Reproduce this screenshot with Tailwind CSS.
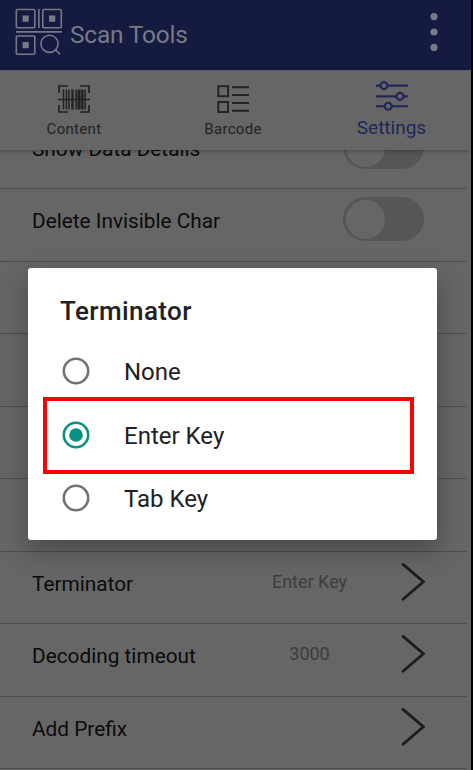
<!DOCTYPE html>
<html lang="en">
<head>
    <meta charset="UTF-8">
    <meta name="viewport" content="width=device-width, initial-scale=1.0">
    <title>Scan Tools - Settings</title>
    <script src="https://cdn.jsdelivr.net/npm/@tailwindcss/browser@4"></script>
</head>
<body class="bg-black font-['Roboto',sans-serif]">
    <div class="relative flex flex-col w-[471px] h-[770px] overflow-hidden bg-[#666666]">

        <!-- App bar -->
        <header class="flex shrink-0 items-start h-[70px] bg-[#151a40] text-[#777985]">
            <svg class="ml-[15px] mt-2 shrink-0" width="48" height="48" viewBox="0 0 48 48" fill="none" stroke="currentColor" stroke-width="1.6">
                <rect x="1.3" y="1.5" width="18.5" height="18.3" rx="1" />
                <rect x="27.8" y="1.5" width="18.5" height="18.3" rx="1" />
                <rect x="1.3" y="28" width="18.5" height="18.3" rx="1" />
                <path d="M23.9 1v19M1 23.9h46" />
                <circle cx="34.5" cy="35.8" r="8.6" />
                <path d="M40.5 41.8l4.6 4.6" />
                <path d="M7.5 7.5h6.3v6.3h-6.3zM34 7.5h6.3v6.3H34zM7.5 34h6.3v6.3h-6.3z" fill="currentColor" stroke="none" />
            </svg>
            <h1 class="ml-[7px] mt-[19px] text-[24.4px] leading-8 tracking-[-0.15px]">Scan Tools</h1>
            <svg class="ml-auto mr-[33px] mt-[12px]" width="8" height="40" viewBox="0 0 8 40" fill="currentColor">
                <circle cx="4" cy="4.6" r="3.6" />
                <circle cx="4" cy="20" r="3.6" />
                <circle cx="4" cy="35.4" r="3.6" />
            </svg>
        </header>

        <!-- Tabs -->
        <nav class="relative z-10 grid grid-cols-[148px_170px_147px] shrink-0 h-20 border-t border-[#5b5e75] bg-[#666666] text-[#222222] shadow-[0_1px_4px_rgba(0,0,0,0.3)]">
            <div class="flex flex-col items-center pt-[13px]">
                <svg width="34" height="30" viewBox="0 0 34 30" fill="none" stroke="currentColor">
                    <path stroke-width="1.7" d="M2 9V2h9M23 2h9v7M32 21v7h-9M11 28H2v-7" />
                    <path stroke-width="1.4" d="M1 15.5h32" />
                    <path stroke-width="1.5" d="M6.5 5.5v20M9.4 5.5v20M12 5.5v20M19 5.5v20M28.2 5.5v20" />
                    <path stroke-width="2.4" d="M15.5 5.5v20M25.4 5.5v20" />
                    <path stroke-width="3.2" d="M22 5.5v20" />
                </svg>
                <span class="mt-[5px] text-[15px] leading-5 tracking-[0.3px]">Content</span>
            </div>
            <div class="flex flex-col items-center pt-[13px]">
                <svg width="34" height="30" viewBox="0 0 34 30" fill="none" stroke="currentColor" stroke-width="1.9">
                    <rect x="2.3" y="2.2" width="9.8" height="10" />
                    <rect x="2.3" y="18" width="9.8" height="10" />
                    <path d="M16 3.2h17M16 11h17M16 19h17M16 26.7h17" />
                </svg>
                <span class="mt-[5px] text-[15px] leading-5 tracking-[0.3px]">Barcode</span>
            </div>
            <div class="flex flex-col items-center pt-[9px] text-[#1f2658]">
                <svg width="34" height="32" viewBox="0 0 34 32" fill="none" stroke="currentColor" stroke-width="2.1">
                    <path d="M1 5.6h4.5M12.5 5.6h20.3M1 16.4h20.3M28.5 16.4h4.3M1 26.2h8.8M16.8 26.2h16" />
                    <circle cx="9" cy="5.6" r="3.5" />
                    <circle cx="25" cy="16.4" r="3.5" />
                    <circle cx="13.2" cy="26.2" r="3.5" />
                </svg>
                <span class="mt-[4px] text-[19px] leading-6">Settings</span>
            </div>
        </nav>

        <!-- Settings list, scrolled so that the first row is partly under the tabs -->
        <main class="-mt-[33px] w-[466px] text-[20.8px] leading-6 text-[#0b0b0b]">
            <div class="flex items-start h-[72.45px] border-b border-[#4b4b4b] pl-8">
                <span class="mt-[20px]">Show Data Details</span>
                <div class="ml-auto mr-[42px] mt-[8px] flex items-center w-[81px] h-11 rounded-full bg-[#565656] pl-[3px]">
                    <div class="size-[39px] rounded-full bg-[#666666]"></div>
                </div>
            </div>
            <div class="flex items-start h-[72.45px] border-b border-[#4b4b4b] pl-8">
                <span class="mt-[20px]">Delete Invisible Char</span>
                <div class="ml-auto mr-[42px] mt-[8px] flex items-center w-[81px] h-11 rounded-full bg-[#565656] pl-[3px]">
                    <div class="size-[39px] rounded-full bg-[#666666]"></div>
                </div>
            </div>
            <div class="h-[72.45px] border-b border-[#4b4b4b]"></div>
            <div class="h-[72.45px] border-b border-[#4b4b4b]"></div>
            <div class="h-[72.45px] border-b border-[#4b4b4b]"></div>
            <div class="h-[72.45px] border-b border-[#4b4b4b]"></div>
            <div class="flex items-start h-[72.45px] border-b border-[#4b4b4b] pl-8">
                <span class="mt-[20px] w-[222px]">Terminator</span>
                <span class="mt-[18px] w-[111px] text-center text-[18px] text-[#3d3d3d]">Enter Key</span>
                <svg class="ml-auto mr-[40px] mt-[10px]" width="26" height="40" viewBox="0 0 26 40" fill="none" stroke="#1c1c1c" stroke-width="2.8" stroke-linecap="round">
                    <path d="M3 2.4L23.4 19.8L3 37.2" />
                </svg>
            </div>
            <div class="flex items-start h-[72.45px] border-b border-[#4b4b4b] pl-8">
                <span class="mt-[20px] w-[222px]">Decoding timeout</span>
                <span class="mt-[18px] w-[111px] text-center text-[18px] text-[#3d3d3d]">3000</span>
                <svg class="ml-auto mr-[40px] mt-[10px]" width="26" height="40" viewBox="0 0 26 40" fill="none" stroke="#1c1c1c" stroke-width="2.8" stroke-linecap="round">
                    <path d="M3 2.4L23.4 19.8L3 37.2" />
                </svg>
            </div>
            <div class="flex items-start h-[72.45px] border-b border-[#4b4b4b] pl-8">
                <span class="mt-[20px] w-[222px]">Add Prefix</span>
                <svg class="ml-auto mr-[40px] mt-[10px]" width="26" height="40" viewBox="0 0 26 40" fill="none" stroke="#1c1c1c" stroke-width="2.8" stroke-linecap="round">
                    <path d="M3 2.4L23.4 19.8L3 37.2" />
                </svg>
            </div>
        </main>

        <!-- Terminator dialog -->
        <div class="absolute z-20 left-[28px] top-[268px] w-[409px] h-[272px] rounded-[3px] bg-white text-[#212121] shadow-[0_10px_28px_rgba(0,0,0,0.3)]">
            <h2 class="pl-8 pt-[27px] text-[26px] leading-8 font-medium tracking-[0.4px]">Terminator</h2>
            <div class="flex items-start mt-[13px] h-[63.5px] pl-[34px] text-[24px] leading-8">
                <svg class="mt-[17px]" width="28" height="28" viewBox="0 0 28 28" fill="none" stroke="#737373" stroke-width="2.6">
                    <circle cx="14" cy="14" r="12.2" />
                </svg>
                <span class="ml-[34px] mt-[16px]">None</span>
            </div>
            <div class="flex items-start h-[63.5px] pl-[34px] text-[24px] leading-8">
                <svg class="mt-[17px]" width="28" height="28" viewBox="0 0 28 28" fill="none" stroke="#0b9182" stroke-width="2.6">
                    <circle cx="14" cy="14" r="12.2" />
                    <circle cx="14" cy="14" r="6.8" fill="#0b9182" stroke="none" />
                </svg>
                <span class="ml-[34px] mt-[16px]">Enter Key</span>
            </div>
            <div class="flex items-start h-[63.5px] pl-[34px] text-[24px] leading-8">
                <svg class="mt-[17px]" width="28" height="28" viewBox="0 0 28 28" fill="none" stroke="#737373" stroke-width="2.6">
                    <circle cx="14" cy="14" r="12.2" />
                </svg>
                <span class="ml-[34px] mt-[16px]">Tab Key</span>
            </div>
            <div class="absolute left-[15px] top-[129px] w-[371px] h-[77px] border-4 border-[#ff0000]"></div>
        </div>
    </div>
</body>
</html>
